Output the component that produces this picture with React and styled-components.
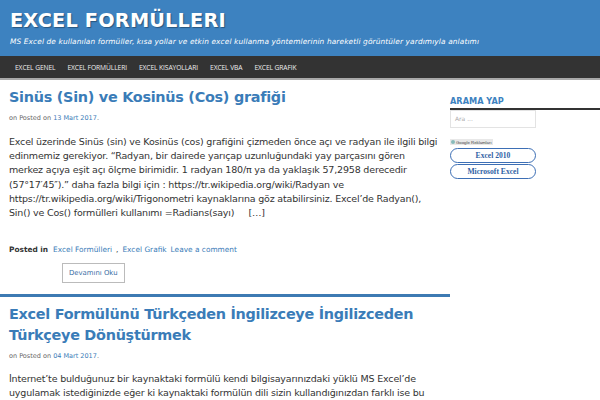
import React from "react";
import styled, { createGlobalStyle } from "styled-components";

const Global = createGlobalStyle`
  html, body { margin: 0; padding: 0; background: #fff; }
  body { font-family: "DejaVu Sans", Verdana, sans-serif; overflow: hidden; }
  * { box-sizing: border-box; }
`;

const Header = styled.header`
  background: #3d82c0;
  height: 56px;
  padding: 10px 10px 0;
`;
const SiteTitle = styled.h1`
  margin: 0;
  font-family: "DejaVu Sans", Verdana, sans-serif;
  font-weight: bold;
  font-size: 19.3px;
  line-height: 22px;
  color: #fff;
  text-shadow: 1px 1px 1px rgba(0,0,0,0.35);
  letter-spacing: 0.2px;
`;
const Tagline = styled.p`
  margin: 5px 0 0;
  font-style: italic;
  font-size: 7.4px;
  letter-spacing: 0.12px;
  color: #fff;
  white-space: nowrap;
`;

const Nav = styled.nav`
  background: #333;
  height: 24px;
  border-bottom: 2px solid #a9a9a9;
  display: flex;
  align-items: center;
  padding-left: 15px;
  gap: 12px;
`;
const NavItem = styled.a`
  font-family: "Open Sans", sans-serif;
  font-size: 6.7px;
  color: #eee;
  letter-spacing: -0.1px;
  text-transform: uppercase;
  white-space: nowrap;
`;

const Layout = styled.div`
  display: flex;
`;
const Main = styled.main`
  width: 450px;
  flex: none;
`;
const Sidebar = styled.aside`
  flex: 1;
  padding-top: 16px;
`;

const Article = styled.article`
  padding: 7px 9px 11px 9px;
  border-bottom: ${(p) => (p.last ? "none" : "3px solid #3d7ab3")};
`;
const PostTitle = styled.h2`
  margin: 0;
  font-weight: bold;
  font-size: 14.4px;
  letter-spacing: -0.27px;
  line-height: 21px;
  color: #3a7cb8;
`;
const Meta = styled.div`
  margin-top: 6px;
  font-size: 6.5px;
  line-height: 8px;
  color: #666;
  a { color: #3a7cb8; }
`;
const Body = styled.p`
  margin: ${(p) => p.gap}px 0 0;
  font-size: 9.5px;
  letter-spacing: -0.18px;
  line-height: 14.2px;
  color: #333;
`;
const Footer = styled.div`
  margin-top: 26px;
  font-size: 7.4px;
  line-height: 8px;
  color: #333;
  display: flex;
  gap: 4px;
  align-items: baseline;
  b { font-weight: bold; margin-right: 1px; }
  a { color: #3a7cb8; }
`;
const MoreButton = styled.button`
  display: block;
  margin: 9px 0 0 53px;
  height: 20px;
  padding: 0 6px;
  border: 1px solid #bbb;
  background: #fff;
  color: #3a6ea5;
  font-family: "DejaVu Sans", sans-serif;
  font-size: 6.9px;
`;

const WidgetTitle = styled.h3`
  margin: 0;
  font-size: 8.2px;
  font-weight: bold;
  color: #3d82c0;
  padding-bottom: 2px;
  border-bottom: 2px solid #333;
`;
const SearchInput = styled.div`
  width: 86px;
  height: 18px;
  border: 1px solid #e3e3e3;
  font-size: 6px;
  color: #aaa;
  padding: 4px 4px;
`;
const AdLabel = styled.div`
  margin-top: 11px;
  display: inline-flex;
  align-items: center;
  gap: 1px;
  background: #e8e8e8;
  font-family: "Liberation Sans", Arial, sans-serif;
  font-size: 4.3px;
  color: #444;
  padding: 0 1px;
  height: 6px;
`;
const AdIcon = styled.span`
  width: 4px;
  height: 4px;
  border-radius: 50%;
  background: #8bb;
`;
const PillList = styled.div`
  display: flex;
  flex-direction: column;
  gap: 1px;
`;
const Pill = styled.a`
  width: 86px;
  height: 15px;
  border: 1px solid #3d6fb5;
  border-radius: 8px;
  display: flex;
  align-items: center;
  justify-content: center;
  font-family: "Liberation Serif", "Times New Roman", serif;
  font-weight: bold;
  font-size: 7.6px;
  color: #2f5fa5;
`;

export default function App() {
  return (
    <>
      <Global />
      <Header>
        <SiteTitle>EXCEL FORMÜLLERI</SiteTitle>
        <Tagline>
          MS Excel de kullanılan formüller, kısa yollar ve etkin excel kullanma yöntemlerinin hareketli görüntüler yardımıyla anlatımı
        </Tagline>
      </Header>
      <Nav>
        <NavItem>Excel Genel</NavItem>
        <NavItem>Excel Formülleri</NavItem>
        <NavItem>Excel Kısayolları</NavItem>
        <NavItem>Excel VBA</NavItem>
        <NavItem>Excel Grafik</NavItem>
      </Nav>
      <Layout>
        <Main>
          <Article>
            <PostTitle>Sinüs (Sin) ve Kosinüs (Cos) grafiği</PostTitle>
            <Meta>
              on Posted on <a>13 Mart 2017</a>.
            </Meta>
            <Body gap={13}>
              Excel üzerinde Sinüs (sin) ve Kosinüs (cos) grafiğini çizmeden önce açı ve radyan ile ilgili bilgi edinmemiz gerekiyor. “Radyan, bir dairede yarıçap uzunluğundaki yay parçasını gören merkez açıya eşit açı ölçme birimidir. 1 radyan 180/π ya da yaklaşık 57,2958 derecedir (57°17′45″).” daha fazla bilgi için : https://tr.wikipedia.org/wiki/Radyan ve https://tr.wikipedia.org/wiki/Trigonometri kaynaklarına göz atabilirsiniz. Excel’de Radyan(), Sin() ve Cos() formülleri kullanımı =Radians(sayı)&nbsp;&nbsp;&nbsp;&nbsp;&nbsp;[…]
            </Body>
            <Footer>
              <b>Posted in</b>
              <a>Excel Formülleri</a>
              <span>,</span>
              <a>Excel Grafik</a>
              <a>Leave a comment</a>
            </Footer>
            <MoreButton>Devamını Oku</MoreButton>
          </Article>
          <Article last>
            <PostTitle>Excel Formülünü Türkçeden İngilizceye İngilizceden Türkçeye Dönüştürmek</PostTitle>
            <Meta>
              on Posted on <a>04 Mart 2017</a>.
            </Meta>
            <Body gap={12}>
              İnternet’te bulduğunuz bir kaynaktaki formülü kendi bilgisayarınızdaki yüklü MS Excel’de uygulamak istediğinizde eğer ki kaynaktaki formülün dili sizin kullandığınızdan farklı ise bu formülü kendi dilinize çevirmeniz gerekir.
            </Body>
          </Article>
        </Main>
        <Sidebar>
          <WidgetTitle>ARAMA YAP</WidgetTitle>
          <SearchInput>Ara ...</SearchInput>
          <AdLabel>
            <AdIcon />
            Google Reklamları
          </AdLabel>
          <PillList>
            <Pill>Excel 2010</Pill>
            <Pill>Microsoft Excel</Pill>
          </PillList>
        </Sidebar>
      </Layout>
    </>
  );
}
